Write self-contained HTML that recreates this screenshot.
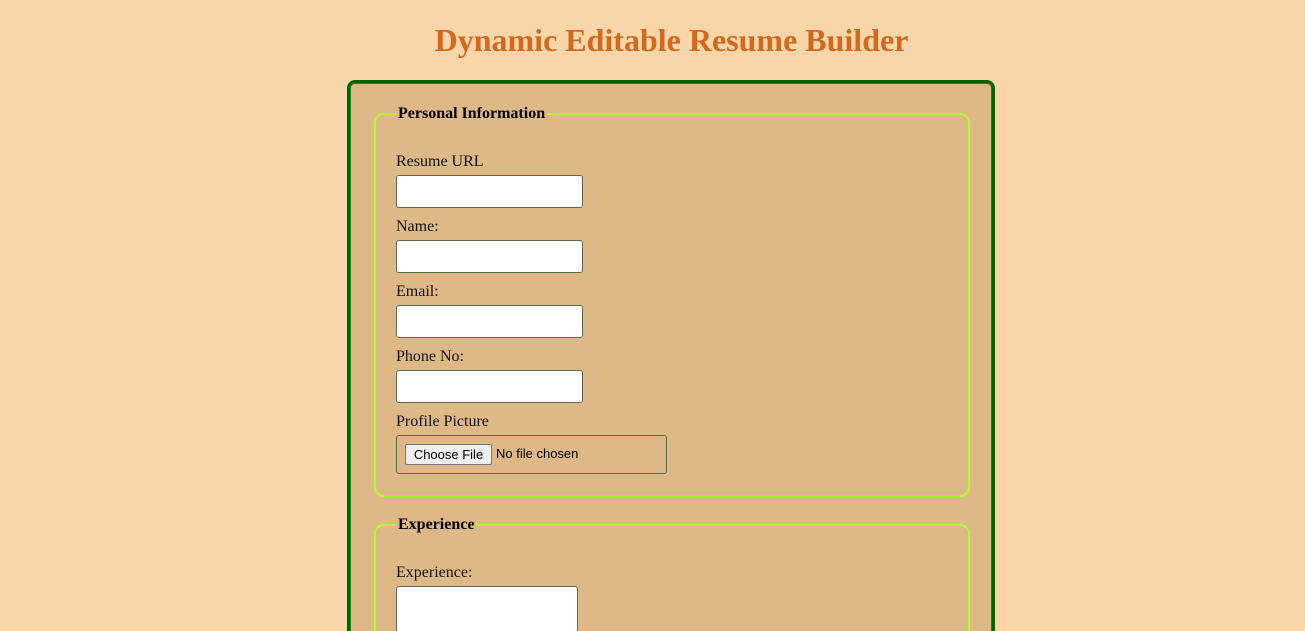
<!DOCTYPE html>
<html style="overflow:hidden;height:631px"><head><style>
body{margin:0;background:#f9d6aa;width:1305px;height:631px;overflow:hidden;position:relative;font-family:"Liberation Serif",serif;}
.a{position:absolute}
h1{position:absolute;left:0;width:1343px;top:20px;margin:0;text-align:center;color:#d2691e;font-size:32px;font-weight:bold;line-height:40px}
.box{left:347px;top:80px;width:642px;height:600px;border:3px solid #006400;border-radius:8px;background:#deb887;box-shadow:inset 0 0 0 1px #0a8a0a}
.fs{border:2px solid #adff2f;border-radius:10px;left:374px;width:592px}
.lg{background:#deb887;font-weight:bold;font-size:16px;padding:0 2px;line-height:18px}
.lb{left:396px;font-size:16px;line-height:18px;color:#111}
.in{left:396px;width:185px;height:31px;background:#fff;border:1px solid #5a6b4a;border-radius:3px}
</style></head><body>
<h1>Dynamic Editable Resume Builder</h1>
<div class="a box" style="height:560px"></div>
<div class="a fs" style="top:113px;height:380px"></div>
<div class="a lg" style="left:396px;top:105px">Personal Information</div>
<div class="a lb" style="top:153px">Resume URL</div><div class="a in" style="top:175px"></div>
<div class="a lb" style="top:218px">Name:</div><div class="a in" style="top:240px"></div>
<div class="a lb" style="top:283px">Email:</div><div class="a in" style="top:305px"></div>
<div class="a lb" style="top:348px">Phone No:</div><div class="a in" style="top:370px"></div>
<div class="a lb" style="top:413px">Profile Picture</div>
<div class="a" style="left:396px;top:435px;width:269px;height:37px;border:1px solid #5a6b4a;border-radius:3px"></div>
<div class="a" style="left:405px;top:444px;width:85px;height:19px;background:#efefef;border:1px solid #767676;border-radius:2px;font:13px 'Liberation Sans',sans-serif;text-align:center;line-height:19px">Choose File</div>
<div class="a" style="left:496px;top:446px;font:13px 'Liberation Sans',sans-serif">No file chosen</div>
<div class="a fs" style="top:524px;height:150px"></div>
<div class="a lg" style="left:396px;top:516px">Experience</div>
<div class="a lb" style="top:564px">Experience:</div>
<div class="a in" style="top:586px;width:180px;height:50px"></div>
</body></html>
